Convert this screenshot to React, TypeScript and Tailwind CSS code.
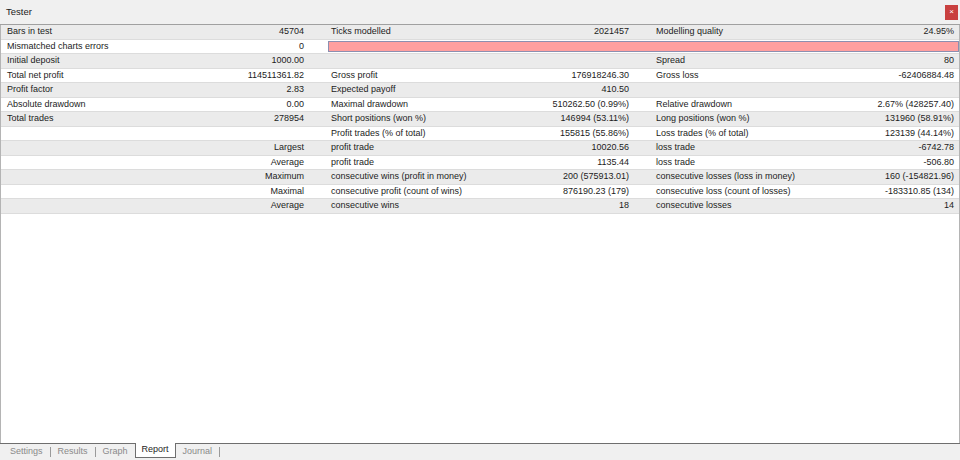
import React from 'react';

type Cell = { label?: string; value?: string };
type Row = { cells: [Cell, Cell, Cell]; bar?: boolean };

const ROWS: Row[] = [
  { cells: [{ label: 'Bars in test', value: '45704' }, { label: 'Ticks modelled', value: '2021457' }, { label: 'Modelling quality', value: '24.95%' }] },
  { cells: [{ label: 'Mismatched charts errors', value: '0' }, {}, {}], bar: true },
  { cells: [{ label: 'Initial deposit', value: '1000.00' }, {}, { label: 'Spread', value: '80' }] },
  { cells: [{ label: 'Total net profit', value: '114511361.82' }, { label: 'Gross profit', value: '176918246.30' }, { label: 'Gross loss', value: '-62406884.48' }] },
  { cells: [{ label: 'Profit factor', value: '2.83' }, { label: 'Expected payoff', value: '410.50' }, {}] },
  { cells: [{ label: 'Absolute drawdown', value: '0.00' }, { label: 'Maximal drawdown', value: '510262.50 (0.99%)' }, { label: 'Relative drawdown', value: '2.67% (428257.40)' }] },
  { cells: [{ label: 'Total trades', value: '278954' }, { label: 'Short positions (won %)', value: '146994 (53.11%)' }, { label: 'Long positions (won %)', value: '131960 (58.91%)' }] },
  { cells: [{}, { label: 'Profit trades (% of total)', value: '155815 (55.86%)' }, { label: 'Loss trades (% of total)', value: '123139 (44.14%)' }] },
  { cells: [{ value: 'Largest' }, { label: 'profit trade', value: '10020.56' }, { label: 'loss trade', value: '-6742.78' }] },
  { cells: [{ value: 'Average' }, { label: 'profit trade', value: '1135.44' }, { label: 'loss trade', value: '-506.80' }] },
  { cells: [{ value: 'Maximum' }, { label: 'consecutive wins (profit in money)', value: '200 (575913.01)' }, { label: 'consecutive losses (loss in money)', value: '160 (-154821.96)' }] },
  { cells: [{ value: 'Maximal' }, { label: 'consecutive profit (count of wins)', value: '876190.23 (179)' }, { label: 'consecutive loss (count of losses)', value: '-183310.85 (134)' }] },
  { cells: [{ value: 'Average' }, { label: 'consecutive wins', value: '18' }, { label: 'consecutive losses', value: '14' }] },
];

const TABS = ['Settings', 'Results', 'Graph', 'Report', 'Journal'];
const ACTIVE = 'Report';

function CellView({ c, last }: { c: Cell; last?: boolean }) {
  return (
    <div className={`flex items-center justify-between pl-[6px] ${last ? 'pr-[5px]' : 'pr-[21px]'}`}>
      <span>{c.label}</span>
      <span>{c.value}</span>
    </div>
  );
}

export default function App() {
  return (
    <div
      className="w-[960px] h-[460px] flex flex-col bg-white text-[9px] text-[#1c1c1c] overflow-hidden"
      style={{ fontFamily: '"Liberation Sans", Arial, sans-serif' }}
    >
      {/* title bar */}
      <div className="h-[25px] shrink-0 flex items-center justify-between pl-[6px] pr-[2px] bg-[#f0f0f0] border-b border-[#a0a0a0] text-[9.5px]">
        <span>Tester</span>
        <div className="w-[13px] h-[15px] bg-[#c9403f] text-white text-[8px] flex items-center justify-center leading-none">×</div>
      </div>

      {/* report table */}
      <div className="flex-1 border-l border-r border-[#b4b4b4]">
        {ROWS.map((r, i) => (
          <div
            key={i}
            className={`relative grid grid-cols-[324px_325px_1fr] h-[14.5px] leading-none border-b border-[#dcdcdc] ${i % 2 === 0 ? 'bg-[#ebebeb]' : 'bg-white'}`}
          >
            <CellView c={r.cells[0]} />
            <CellView c={r.cells[1]} />
            <CellView c={r.cells[2]} last />
            {r.bar && (
              <div className="absolute left-[327px] right-0 top-[1px] bottom-[1px] bg-[#ff9f9f] border border-[#8c8fb0]" />
            )}
          </div>
        ))}
      </div>

      {/* tabs */}
      <div className="h-[17px] shrink-0 flex items-start bg-[#f0f0f0] border-t border-[#6e6e6e] pl-[3px]">
        {TABS.map((t, i) => {
          const active = t === ACTIVE;
          const beforeActive = TABS[i + 1] === ACTIVE;
          return active ? (
            <div key={t} className="h-[15px] -mt-px px-[6px] flex items-center bg-white border border-t-0 border-[#6e6e6e] text-[#1e1e1e]">
              {t}
            </div>
          ) : (
            <div key={t} className="h-[15px] flex items-center text-[#8a8a8a]">
              <span className="px-[7px]">{t}</span>
              {!beforeActive && <span className="w-px h-[10px] bg-[#9a9a9a]" />}
            </div>
          );
        })}
      </div>
    </div>
  );
}
